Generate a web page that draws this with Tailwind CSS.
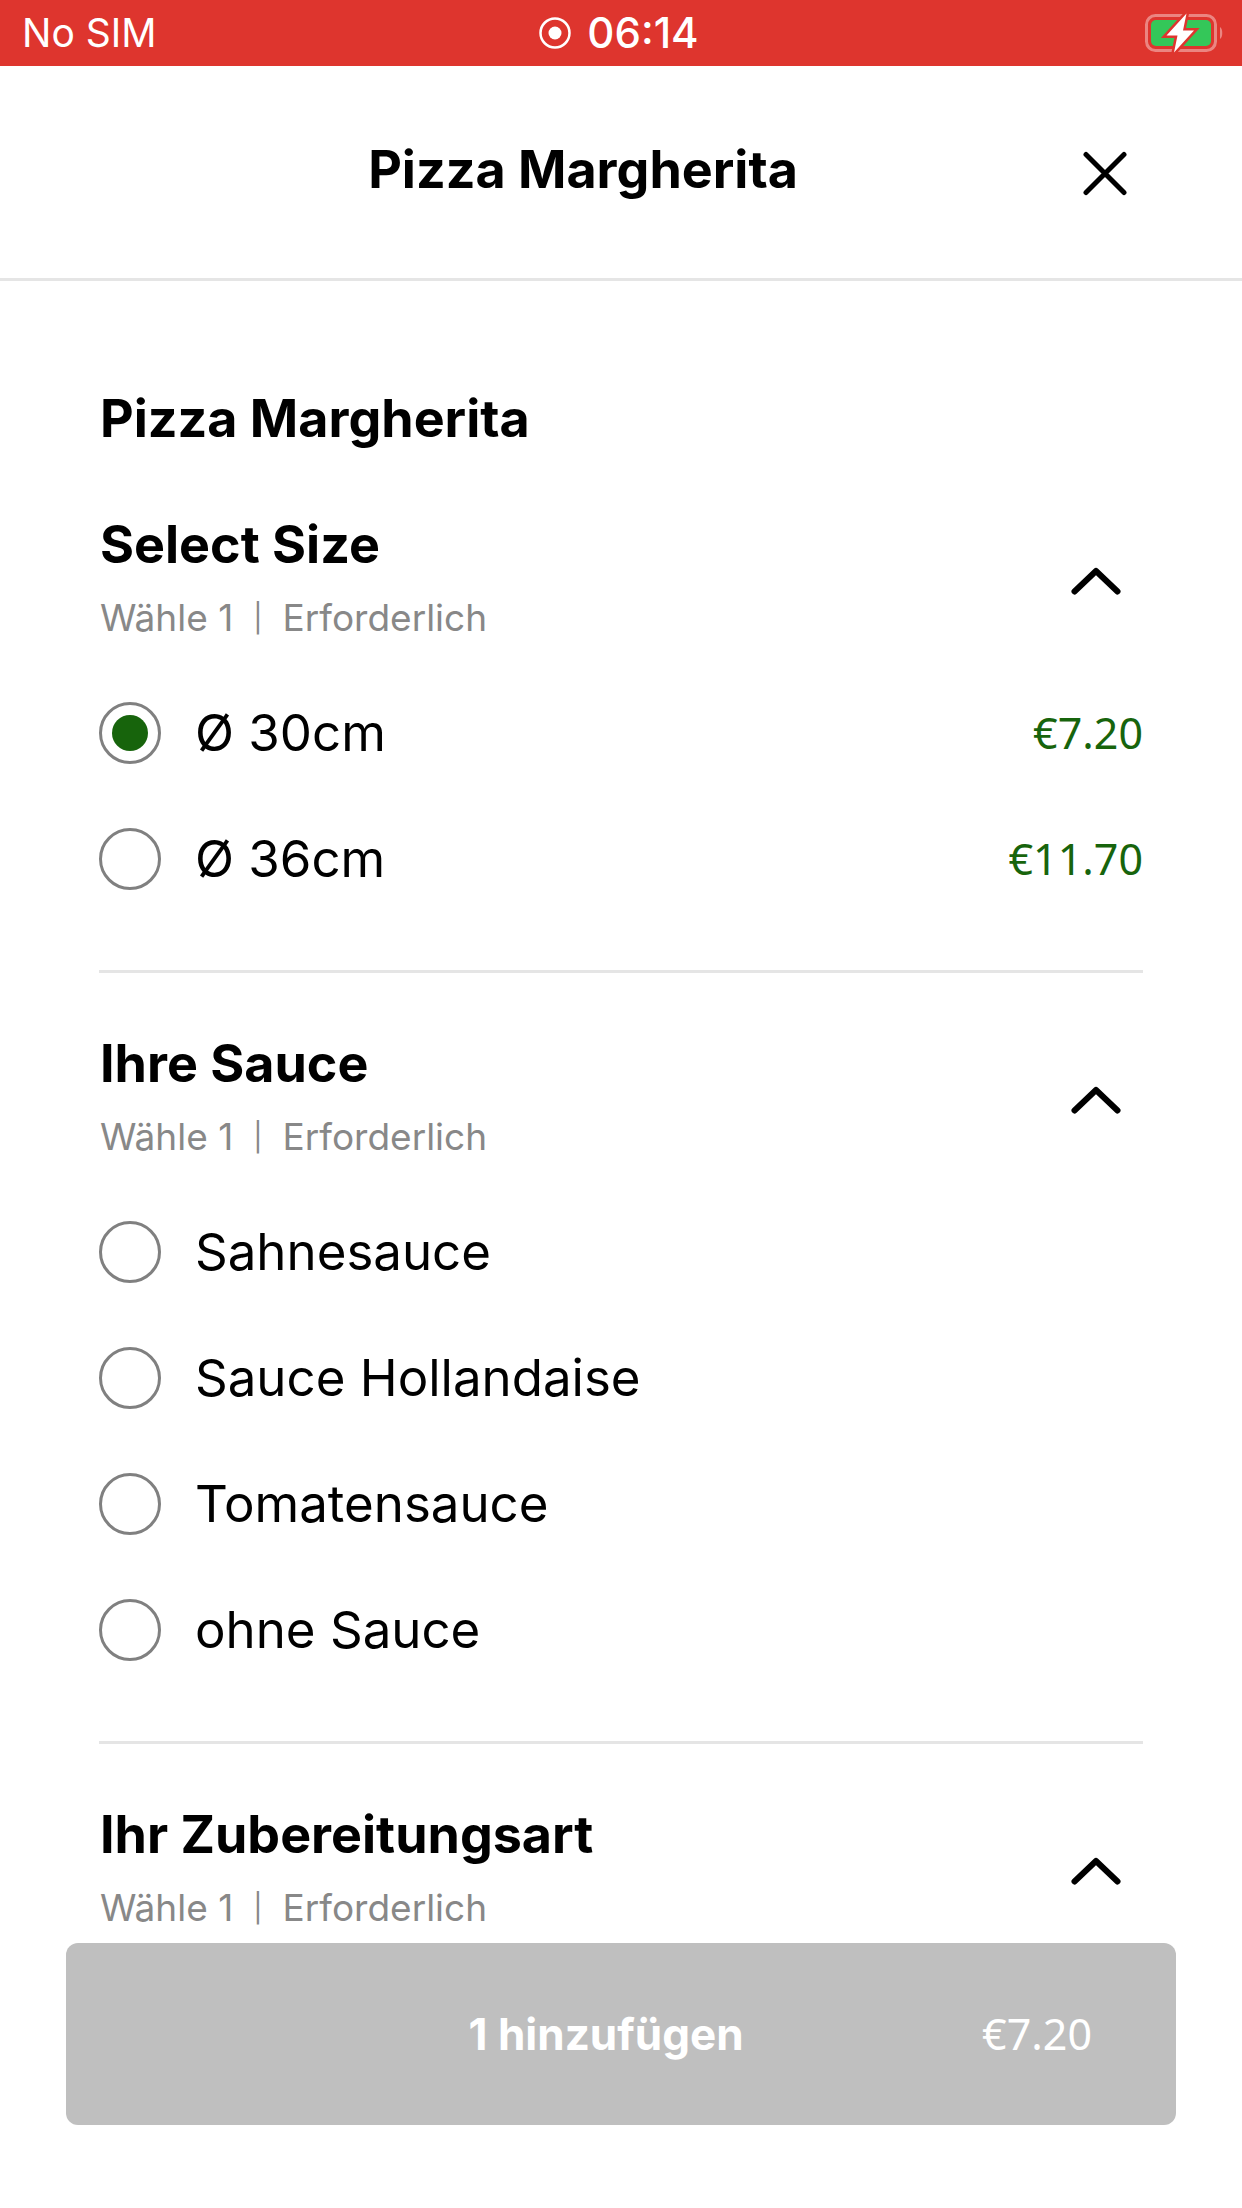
<!DOCTYPE html>
<html lang="de">
<head>
    <meta charset="UTF-8">
    <meta name="viewport" content="width=device-width, initial-scale=1.0">
    <title>Pizza Margherita</title>
    <script src="https://cdn.jsdelivr.net/npm/@tailwindcss/browser@4"></script>
</head>
<body class="min-h-screen flex flex-col bg-white text-black font-['Inter',sans-serif]">

    <!-- Status bar -->
    <div class="grid grid-cols-3 items-center h-[66px] pl-[22px] pr-[18px] bg-[#de352e] text-white text-[39px] leading-[66px]">
        <span>No SIM</span>
        <div class="flex items-center justify-center gap-4 pr-2 font-medium">
            <svg class="size-8" viewBox="0 0 32 32" fill="none">
                <circle cx="16" cy="16" r="14.500" stroke="white" stroke-width="2.500"/>
                <circle cx="16" cy="16" r="6.500" fill="white"/>
            </svg>
            <span class="text-[42px]">06:14</span>
        </div>
        <svg class="justify-self-end w-20 h-10" viewBox="0 0 80 40" fill="none">
            <rect x="2.500" y="2.500" width="69" height="35" rx="9" stroke="white" stroke-opacity="0.4" stroke-width="3"/>
            <path d="M76 14c3 1.500 3 10.500 0 12z" fill="white" fill-opacity="0.4"/>
            <rect x="7" y="7" width="60" height="26" rx="5" fill="#34c759"/>
            <path d="M42.500 0.500 22.500 22.500h11L30 39.500l20-22H39z" fill="white" stroke="#de352e" stroke-width="5" paint-order="stroke"/>
        </svg>
    </div>

    <header class="flex items-center h-[215px] px-[99px] border-b-3 border-[#e5e5e5]">
        <h1 class="flex-1 pb-1 text-center text-[52px] leading-[76px] font-bold">Pizza Margherita</h1>
        <button type="button" aria-label="Schließen" class="flex items-center justify-center w-[76px] h-[76px]">
            <svg class="size-12" viewBox="0 0 48 48" fill="none" stroke="black" stroke-width="5" stroke-linecap="round">
                <path d="M5 6.500l38 38M43 6.500L5 44.500"/>
            </svg>
        </button>
    </header>

    <main class="grow px-[99px] pt-[100px]">
        <h2 class="mb-[50px] pl-px text-[52px] leading-[76px] font-bold">Pizza Margherita</h2>

        <section class="pb-12 border-b-3 border-[#e5e5e5]">
            <div class="flex items-center justify-between mb-[17px] pl-px">
                <div>
                    <h3 class="text-[52px] leading-[76px] font-bold">Select Size</h3>
                    <p class="flex gap-5 text-[37px] leading-[70px] text-[#888888]"><span>Wähle 1</span><span class="text-[28px]">|</span><span>Erforderlich</span></p>
                </div>
                <button type="button" aria-label="Select Size einklappen" class="flex items-center justify-center w-[94px] h-[94px]">
                    <svg class="w-[50px] h-[30px]" viewBox="0 0 50 30" fill="none" stroke="black" stroke-width="6" stroke-linecap="round" stroke-linejoin="round">
                        <path d="M3.500 26.500 25 6l21.500 20.500"/>
                    </svg>
                </button>
            </div>
            <label class="flex items-center h-[126px] text-[51px]">
                <input type="radio" name="size" checked class="appearance-none size-[62px] mr-[34px] rounded-full border-3 border-[#808080] p-[10px] bg-clip-content checked:bg-[#17640c]">
                <span class="flex-1">Ø 30cm</span>
                <span class="font-['Noto_Sans',sans-serif] text-[43px] text-[#17640c]">€7.20</span>
            </label>
            <label class="flex items-center h-[126px] text-[51px]">
                <input type="radio" name="size" class="appearance-none size-[62px] mr-[34px] rounded-full border-3 border-[#808080] p-[10px] bg-clip-content checked:bg-[#17640c]">
                <span class="flex-1">Ø 36cm</span>
                <span class="font-['Noto_Sans',sans-serif] text-[43px] text-[#17640c]">€11.70</span>
            </label>
        </section>

        <section class="pt-[53px] pb-12 border-b-3 border-[#e5e5e5]">
            <div class="flex items-center justify-between mb-[17px] pl-px">
                <div>
                    <h3 class="text-[52px] leading-[76px] font-bold">Ihre Sauce</h3>
                    <p class="flex gap-5 text-[37px] leading-[70px] text-[#888888]"><span>Wähle 1</span><span class="text-[28px]">|</span><span>Erforderlich</span></p>
                </div>
                <button type="button" aria-label="Ihre Sauce einklappen" class="flex items-center justify-center w-[94px] h-[94px]">
                    <svg class="w-[50px] h-[30px]" viewBox="0 0 50 30" fill="none" stroke="black" stroke-width="6" stroke-linecap="round" stroke-linejoin="round">
                        <path d="M3.500 26.500 25 6l21.500 20.500"/>
                    </svg>
                </button>
            </div>
            <label class="flex items-center h-[126px] text-[51px]">
                <input type="radio" name="sauce" class="appearance-none size-[62px] mr-[34px] rounded-full border-3 border-[#808080] p-[10px] bg-clip-content checked:bg-[#17640c]">
                <span>Sahnesauce</span>
            </label>
            <label class="flex items-center h-[126px] text-[51px]">
                <input type="radio" name="sauce" class="appearance-none size-[62px] mr-[34px] rounded-full border-3 border-[#808080] p-[10px] bg-clip-content checked:bg-[#17640c]">
                <span>Sauce Hollandaise</span>
            </label>
            <label class="flex items-center h-[126px] text-[51px]">
                <input type="radio" name="sauce" class="appearance-none size-[62px] mr-[34px] rounded-full border-3 border-[#808080] p-[10px] bg-clip-content checked:bg-[#17640c]">
                <span>Tomatensauce</span>
            </label>
            <label class="flex items-center h-[126px] text-[51px]">
                <input type="radio" name="sauce" class="appearance-none size-[62px] mr-[34px] rounded-full border-3 border-[#808080] p-[10px] bg-clip-content checked:bg-[#17640c]">
                <span>ohne Sauce</span>
            </label>
        </section>

        <section class="pt-[53px]">
            <div class="flex items-center justify-between pl-px">
                <div>
                    <h3 class="text-[52px] leading-[76px] font-bold">Ihr Zubereitungsart</h3>
                    <p class="flex gap-5 text-[37px] leading-[70px] text-[#888888]"><span>Wähle 1</span><span class="text-[28px]">|</span><span>Erforderlich</span></p>
                </div>
                <button type="button" aria-label="Ihr Zubereitungsart einklappen" class="flex items-center justify-center w-[94px] h-[94px]">
                    <svg class="w-[50px] h-[30px]" viewBox="0 0 50 30" fill="none" stroke="black" stroke-width="6" stroke-linecap="round" stroke-linejoin="round">
                        <path d="M3.500 26.500 25 6l21.500 20.500"/>
                    </svg>
                </button>
            </div>
        </section>
    </main>

    <!-- Add to cart -->
    <footer class="px-[66px] pb-[83px]">
        <button type="button" disabled class="flex items-center w-full h-[182px] pl-[164px] pr-[84px] rounded-xl bg-[#bfbfbf] text-white">
            <span class="flex-1 text-center text-[44px] font-bold">1 hinzufügen</span>
            <span class="font-['Noto_Sans',sans-serif] text-[43px]">€7.20</span>
        </button>
    </footer>

</body>
</html>
